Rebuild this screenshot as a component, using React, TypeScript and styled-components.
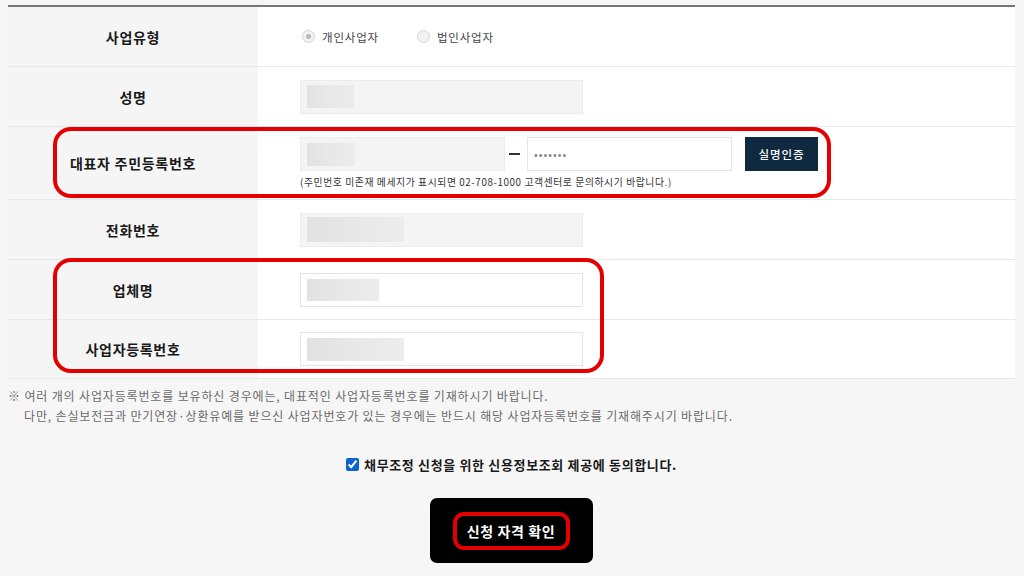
import React from "react";
import styled, { createGlobalStyle } from "styled-components";

const Global = createGlobalStyle`
  html, body { margin: 0; padding: 0; }
  body {
    background: #f6f6f6;
    font-family: "Noto Sans CJK KR", "Noto Sans", sans-serif;
    color: #222;
  }
`;

const Page = styled.div`
  position: relative;
  width: 1024px;
  height: 576px;
  overflow: hidden;
  padding: 5px 9px 0 8px;
  box-sizing: border-box;
`;

const Table = styled.div`
  border-top: 2px solid #777;
  display: flex;
  flex-direction: column;
`;

const Row = styled.div<{ $h: number }>`
  display: grid;
  grid-template-columns: 250px 1fr;
  height: ${(p) => p.$h}px;
  border-bottom: 1px solid #e7e7e7;
`;

const LabelCell = styled.div`
  background: #f5f5f5;
  display: flex;
  align-items: center;
  justify-content: center;
  font-size: 14px;
  font-weight: 700;
  color: #1a1a1a;
  letter-spacing: 0.7px;
`;

const ValueCell = styled.div`
  background: #fff;
  padding-left: 42px;
  display: flex;
  flex-direction: column;
  justify-content: center;
`;

const RadioGroup = styled.div`
  display: flex;
  align-items: center;
  gap: 36px;
`;

const RadioItem = styled.label`
  display: flex;
  align-items: center;
  gap: 7px;
  font-size: 11.5px;
  color: #444;
  margin-left: 2px;
  letter-spacing: 0.8px;
`;

const RadioDot = styled.span<{ $on?: boolean }>`
  width: 11px;
  height: 11px;
  border-radius: 50%;
  border: 1px solid #d4d4d4;
  background: #f3f3f3;
  display: inline-flex;
  align-items: center;
  justify-content: center;
  &::after {
    content: "";
    width: 5px;
    height: 5px;
    border-radius: 50%;
    background: ${(p) => (p.$on ? "#b9b9b9" : "transparent")};
  }
`;

const InputBox = styled.div<{ $filled?: boolean; $w?: number }>`
  width: ${(p) => p.$w ?? 283}px;
  height: 34px;
  box-sizing: border-box;
  border: 1px solid ${(p) => (p.$filled ? "#ececec" : "#e4e4e4")};
  background: ${(p) => (p.$filled ? "#f4f4f4" : "#fff")};
  display: flex;
  align-items: center;
  padding-left: 6px;
  font-size: 11px;
  color: #888;
  letter-spacing: 1px;
`;

const Redacted = styled.span<{ $w: number; $h: number }>`
  display: inline-block;
  width: ${(p) => p.$w}px;
  height: ${(p) => p.$h}px;
  background: linear-gradient(90deg, #e2e2e2 0%, #e8e8e8 50%, #ececec 100%);
  filter: blur(0.6px);
`;

const IdLine = styled.div`
  display: flex;
  align-items: center;
`;

const Dash = styled.span`
  width: 11px;
  height: 2px;
  background: #333;
  margin: 0 7px 0 4px;
`;

const AuthButton = styled.button`
  margin-left: 13px;
  width: 73px;
  height: 34px;
  border: none;
  background: #0f2a40;
  color: #fff;
  font-family: inherit;
  font-size: 11.5px;
  font-weight: 500;
  letter-spacing: 0.9px;
  padding: 0;
`;

const Helper = styled.div`
  margin-top: 4px;
  font-size: 9.8px;
  color: #333;
  letter-spacing: 0.6px;
  line-height: 14px;
`;

const Notes = styled.div`
  margin-top: 7px;
  font-size: 12px;
  color: #6a6a6a;
  line-height: 20px;
  letter-spacing: 0.85px;
`;

const NoteIndent = styled.div`
  padding-left: 16px;
`;

const Agree = styled.label`
  margin-top: 28px;
  display: flex;
  align-items: center;
  justify-content: center;
  gap: 5px;
  font-size: 13px;
  font-weight: 700;
  color: #1a1a1a;
  height: 20px;
  letter-spacing: 0.65px;
`;

const Check = styled.input`
  width: 13px;
  height: 13px;
  margin: 0;
  accent-color: #0b63ce;
`;

const SubmitWrap = styled.div`
  margin-top: 24px;
  display: flex;
  justify-content: center;
  padding-right: 1px;
`;

const Submit = styled.button`
  width: 163px;
  height: 65px;
  background: #000;
  border: none;
  border-radius: 7px;
  display: flex;
  align-items: center;
  justify-content: center;
  padding: 0;
`;

const SubmitMark = styled.span`
  width: 117px;
  height: 38px;
  box-sizing: border-box;
  border: 4px solid #e50000;
  border-radius: 11px;
  display: flex;
  align-items: center;
  justify-content: center;
  color: #fff;
  font-family: "Noto Sans CJK KR", sans-serif;
  font-size: 14px;
  font-weight: 700;
  letter-spacing: 0.6px;
`;

const Annotation = styled.div<{ $x: number; $y: number; $w: number; $h: number }>`
  position: absolute;
  left: ${(p) => p.$x}px;
  top: ${(p) => p.$y}px;
  width: ${(p) => p.$w}px;
  height: ${(p) => p.$h}px;
  box-sizing: border-box;
  border: 4px solid #e50000;
  border-radius: 18px;
  pointer-events: none;
`;

export default function App() {
  return (
    <>
      <Global />
      <Page>
        <Table>
          <Row $h={59}>
            <LabelCell>사업유형</LabelCell>
            <ValueCell>
              <RadioGroup>
                <RadioItem>
                  <RadioDot $on />
                  개인사업자
                </RadioItem>
                <RadioItem>
                  <RadioDot />
                  법인사업자
                </RadioItem>
              </RadioGroup>
            </ValueCell>
          </Row>
          <Row $h={59}>
            <LabelCell>성명</LabelCell>
            <ValueCell>
              <InputBox $filled>
                <Redacted $w={47} $h={23} />
              </InputBox>
            </ValueCell>
          </Row>
          <Row $h={72}>
            <LabelCell>대표자 주민등록번호</LabelCell>
            <ValueCell>
              <IdLine>
                <InputBox $filled $w={205}>
                  <Redacted $w={48} $h={23} />
                </InputBox>
                <Dash />
                <InputBox $w={205}>•••••••</InputBox>
                <AuthButton>실명인증</AuthButton>
              </IdLine>
              <Helper>
                (주민번호 미존재 메세지가 표시되면 02-708-1000 고객센터로 문의하시기 바랍니다.)
              </Helper>
            </ValueCell>
          </Row>
          <Row $h={59}>
            <LabelCell>전화번호</LabelCell>
            <ValueCell>
              <InputBox $filled>
                <Redacted $w={97} $h={25} />
              </InputBox>
            </ValueCell>
          </Row>
          <Row $h={59}>
            <LabelCell>업체명</LabelCell>
            <ValueCell>
              <InputBox>
                <Redacted $w={72} $h={22} />
              </InputBox>
            </ValueCell>
          </Row>
          <Row $h={58}>
            <LabelCell>사업자등록번호</LabelCell>
            <ValueCell>
              <InputBox>
                <Redacted $w={97} $h={23} />
              </InputBox>
            </ValueCell>
          </Row>
        </Table>
        <Notes>
          <div>※ 여러 개의 사업자등록번호를 보유하신 경우에는, 대표적인 사업자등록번호를 기재하시기 바랍니다.</div>
          <NoteIndent>
            다만, 손실보전금과 만기연장·상환유예를 받으신 사업자번호가 있는 경우에는 반드시 해당 사업자등록번호를 기재해주시기 바랍니다.
          </NoteIndent>
        </Notes>
        <Agree>
          <Check type="checkbox" checked readOnly />
          채무조정 신청을 위한 신용정보조회 제공에 동의합니다.
        </Agree>
        <SubmitWrap>
          <Submit>
            <SubmitMark>신청 자격 확인</SubmitMark>
          </Submit>
        </SubmitWrap>
        <Annotation $x={53} $y={127} $w={778} $h={71} />
        <Annotation $x={53} $y={258} $w={551} $h={115} />
      </Page>
    </>
  );
}
